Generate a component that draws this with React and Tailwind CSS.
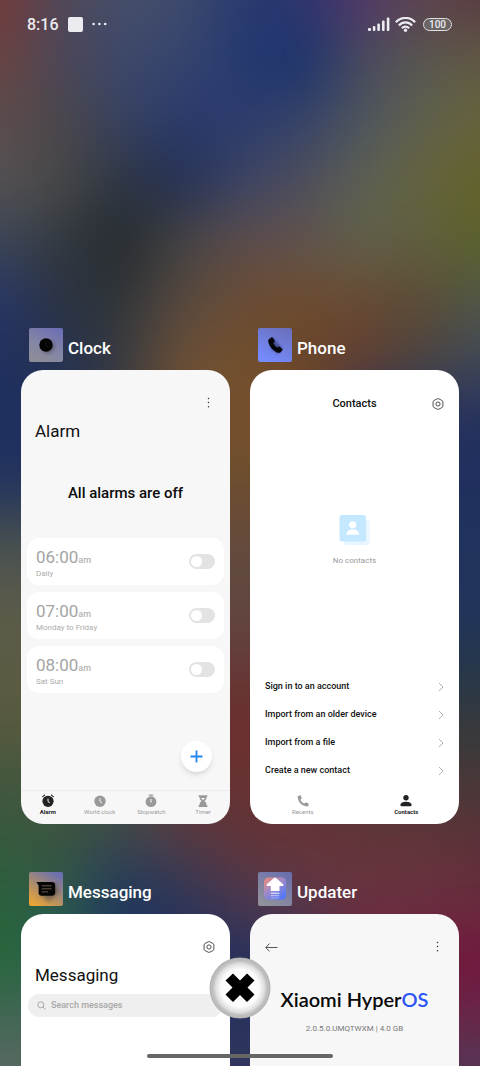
import React from "react";

const wallpaper = [
  "743838 504858 454e6a 414c6c 273a70 2c366e 52366a 5c4550 5a3a40",
  "6a4440 4c4658 3c486a 36446e 263a70 16306e 484a60 575650 605a44",
  "5c4c4e 4a4648 384260 2a3a6c 2b3a6c 36426a 4c545e 606050 66643a",
  "565254 484848 2e3642 222e54 3a4466 4c4c5c 5c6054 66633e 62622a",
  "3c4656 343a40 22272b 444444 5c4c4c 60524e 60604a 5f5f42 5c6228",
  "28366a 2a3240 2e3438 564840 6a4c34 6e4c2e 684a34 5c4a34 505848",
  "20305e 263250 363a40 6c5038 72502e 6a4426 643e30 4c4440 404858",
  "1e2f60 1e2f60 3a3a3c 74502c 74502c 74502c 26305e 26305e 24305e",
  "22325e 22325e 3a3a3c 6e4e30 6e4e30 6e4e30 20305e 20305e 20305e",
  "465050 465050 465050 644a3c 644a3c 644a3c 20325e 20325e 20325e",
  "5a5a4a 5a5a4a 5a5a4a 604840 604840 604840 22345c 22345c 22345c",
  "5c5c46 5c5c46 5c5c46 643c3a 643c3a 643c3a 24364e 24364e 24364e",
  "585a3c 585a3c 585a3c 6a2e2c 6a2e2c 6a2e2c 343a3c 343a3c 343a3c",
  "445640 445640 445640 683232 683232 683232 483838 483838 483838",
  "345a3c 3a543e 384650 503c48 603438 643438 643438 623438 5a3238",
  "2a603c 2e5a4c 1e365e 2c3658 4a3850 603848 683440 6a3242 682c3c",
  "286838 246050 1e3660 222e5c 26305c 26305c 70183c 70183c 72163e",
  "446656 446656 28325e 28325e 28325e 28325e 682848 682848 682848",
  "5c6a62 5c6a62 34385c 34385c 34385c 34385c 503858 503858 503858",
].map((row) => row.split(" "));

function Wallpaper() {
  return (
    <svg
      aria-hidden="true"
      className="absolute inset-0 h-full w-full bg-[#3a3a44]"
      viewBox="0 0 480 1066"
      preserveAspectRatio="none"
    >
      <filter id="soften" filterUnits="userSpaceOnUse" x="-120" y="-120" width="720" height="1320" colorInterpolationFilters="sRGB">
        <feGaussianBlur stdDeviation="29" />
      </filter>
      <g filter="url(#soften)">
        {wallpaper.map((row, r) =>
          row.map((color, c) => {
            const left = c === 0 ? -120 : c * 60 - 30;
            const right = c === row.length - 1 ? 600 : c * 60 + 31;
            const top = r === 0 ? -120 : r * 60 - 30;
            const bottom = r === wallpaper.length - 1 ? 1200 : r * 60 + 31;
            return (
              <rect key={`${r}-${c}`} x={left} y={top} width={right - left} height={bottom - top} fill={`#${color}`} />
            );
          })
        )}
      </g>
    </svg>
  );
}

function StatusBar() {
  return (
    <header className="flex h-12 shrink-0 items-center justify-between pr-7 pl-[27px] text-[#ececf0]">
      <div className="flex items-center gap-[9px]">
        <time className="pt-px text-base font-medium">8:16</time>
        <span className="size-[15px] rounded-xs bg-[#ececf0]" />
        <svg width="15" height="4" viewBox="0 0 15 4" fill="currentColor" aria-hidden="true">
          <circle cx="1.6" cy="2" r="1.3" />
          <circle cx="7.4" cy="2" r="1.3" />
          <circle cx="13.2" cy="2" r="1.3" />
        </svg>
      </div>
      <div className="flex items-center">
        <svg width="22" height="14" viewBox="0 0 22 14" fill="currentColor" aria-label="Signal">
          <rect x="0" y="11" width="3" height="3" rx="1" />
          <rect x="4.8" y="9" width="2.6" height="5" rx="1" />
          <rect x="9.3" y="6.5" width="2.6" height="7.5" rx="1" />
          <rect x="14" y="3.5" width="2.6" height="10.5" rx="1" />
          <rect x="18.8" y="0.5" width="2.6" height="13.5" rx="1" />
        </svg>
        <svg className="ml-[5px]" width="21" height="15" viewBox="0 0 21 15" fill="none" stroke="currentColor" strokeWidth="2.2" aria-label="Wi-Fi">
          <path d="M0.9 5.3C6 -0.5 15 -0.5 20.1 5.3" />
          <path d="M3.9 8.4C7.5 4.4 13.5 4.4 17.1 8.4" />
          <path d="M6.9 11.3C9 9 12 9 14.1 11.3" />
          <circle cx="10.5" cy="13.2" r="1.7" fill="currentColor" stroke="none" />
        </svg>
        <span className="ml-[7px] flex h-[13px] w-[29px] items-center justify-center rounded-full border border-[#e0e0e0] bg-[#777777]/60 pt-px text-[10px] leading-none font-medium">
          100
        </span>
      </div>
    </header>
  );
}

function MoreIcon() {
  return (
    <svg width="4" height="12" viewBox="0 0 4 12" fill="#333" aria-hidden="true">
      <circle cx="1.5" cy="1.6" r="0.75" />
      <circle cx="1.5" cy="5.6" r="0.75" />
      <circle cx="1.5" cy="9.8" r="0.75" />
    </svg>
  );
}

function SettingsIcon() {
  return (
    <svg width="12" height="12" viewBox="0 0 12 12" fill="none" stroke="#3c3c3c" strokeWidth="0.9" strokeLinejoin="round" aria-hidden="true">
      <path d="M5.2 0.8Q6 0.4 6.8 0.8L10.2 2.6Q10.9 3 10.9 3.8V8.2Q10.9 9 10.2 9.4L6.8 11.2Q6 11.6 5.2 11.2L1.8 9.4Q1.1 9 1.1 8.2V3.8Q1.1 3 1.8 2.6Z" />
      <circle cx="6" cy="6" r="2.1" />
    </svg>
  );
}

function IconButton({ label, children }) {
  return (
    <button type="button" aria-label={label} className="flex size-4 items-center justify-center">
      {children}
    </button>
  );
}

const tile = "size-[34px] shrink-0 rounded-xs";

function ClockAppIcon() {
  return (
    <svg className={tile} viewBox="0 0 34 34" aria-hidden="true">
      <defs>
        <linearGradient id="clockBg" x1="0.8" y1="0" x2="0.3" y2="1">
          <stop offset="0" stopColor="#6c6fb4" />
          <stop offset="0.6" stopColor="#8586a4" />
          <stop offset="1" stopColor="#8c8c98" />
        </linearGradient>
        <filter id="clockShade"><feGaussianBlur stdDeviation="2" /></filter>
      </defs>
      <rect width="34" height="34" fill="url(#clockBg)" />
      <path d="M12 20L21 12L26 19L19 26Z" fill="#333" opacity="0.55" filter="url(#clockShade)" />
      <circle cx="17" cy="17" r="6.7" fill="#040404" />
      <path d="M17 13V17L19 19" stroke="#1c1c1c" strokeWidth="0.8" fill="none" />
    </svg>
  );
}

function PhoneAppIcon() {
  return (
    <svg className={tile} viewBox="0 0 34 34" aria-hidden="true">
      <defs>
        <linearGradient id="phoneBg" x1="0.8" y1="0" x2="0.3" y2="1">
          <stop offset="0" stopColor="#6b70bc" />
          <stop offset="1" stopColor="#758cff" />
        </linearGradient>
        <filter id="phoneShade"><feGaussianBlur stdDeviation="1.5" /></filter>
      </defs>
      <rect width="34" height="34" fill="url(#phoneBg)" />
      <path d="M14 10L24 20L20 26L13 20Z" fill="#222650" opacity="0.6" filter="url(#phoneShade)" />
      <path d="M11.2 11.2L13.3 9.7Q14.2 9.2 14.8 10L16.4 12.6Q16.8 13.4 16.1 14L15 15.1Q16.1 18 19.1 20L20.5 19.1Q21.3 18.6 22 19.2L24 21Q24.6 21.8 24 22.5L22.2 24.2Q20.8 25 18.5 23.9Q12.1 20.6 10.6 14Q10.3 12 11.2 11.2Z" fill="#050505" stroke="#050505" strokeWidth="0.6" />
    </svg>
  );
}

function MessagingAppIcon() {
  return (
    <svg className={tile} viewBox="0 0 34 34" aria-hidden="true">
      <defs>
        <linearGradient id="msgBg" x1="0.8" y1="0" x2="0.2" y2="1">
          <stop offset="0" stopColor="#6b6fb0" />
          <stop offset="0.5" stopColor="#a58a72" />
          <stop offset="1" stopColor="#e9a535" />
        </linearGradient>
        <filter id="msgShade"><feGaussianBlur stdDeviation="2" /></filter>
      </defs>
      <rect width="34" height="34" fill="url(#msgBg)" />
      <path d="M11 22L26 11L30 20L20 30Z" fill="#333" opacity="0.45" filter="url(#msgShade)" />
      <path d="M7.4 10H22.8Q26.2 10 26.2 13.2V20.6Q26.2 23.8 22.8 23.8H12.8Q9.6 23.8 9.6 20.6V13.4Z" fill="#060606" />
      <path d="M12.7 13.8H22.6M12.7 16.8H22.6M12.7 19.9H19" stroke="#75604f" strokeWidth="0.9" />
    </svg>
  );
}

function UpdaterAppIcon() {
  return (
    <svg className={tile} viewBox="0 0 34 34" aria-hidden="true">
      <defs>
        <linearGradient id="updBg" x1="0.8" y1="0" x2="0.2" y2="1">
          <stop offset="0" stopColor="#6b70ae" />
          <stop offset="1" stopColor="#92939a" />
        </linearGradient>
        <linearGradient id="updTile" x1="0" y1="0" x2="0.8" y2="1">
          <stop offset="0" stopColor="#f58a72" />
          <stop offset="0.45" stopColor="#a58ac4" />
          <stop offset="1" stopColor="#4f78ff" />
        </linearGradient>
      </defs>
      <rect width="34" height="34" fill="url(#updBg)" />
      <rect x="6" y="5.5" width="22" height="22" rx="4.5" fill="url(#updTile)" />
      <path d="M16 6Q17 5.2 18 6L25.4 12.5Q26 13.8 24.6 14H21.5V19H12.8V14H9.4Q8 13.8 8.6 12.5Z" fill="#fff" />
      <path d="M12.8 21.2H21.3" stroke="#fff" strokeWidth="1" opacity="0.9" />
      <path d="M12.8 23.7H21.3" stroke="#fff" strokeWidth="0.8" opacity="0.7" />
      <path d="M13 26H21" stroke="#fff" strokeWidth="0.7" opacity="0.5" />
    </svg>
  );
}

function AppTask({ name, icon, grow, tone, children }) {
  return (
    <article className={grow ? "flex flex-1 flex-col" : "flex flex-col"}>
      <div className="flex h-[34px] items-center gap-[5px] pl-2">
        {icon}
        <h2 className="pt-1.5 text-[17px] leading-6 font-medium text-white">{name}</h2>
      </div>
      <div className={`mt-2 flex flex-1 flex-col overflow-hidden rounded-t-[22px] ${grow ? "" : "rounded-b-[22px]"} ${tone}`}>
        {children}
      </div>
    </article>
  );
}

const alarms = [
  { time: "06:00", repeat: "Daily" },
  { time: "07:00", repeat: "Monday to Friday" },
  { time: "08:00", repeat: "Sat Sun" },
];

function ClockTab({ kind }) {
  return (
    <svg width="14" height="14" viewBox="0 0 14 14" fill="currentColor" aria-hidden="true">
      {kind === "alarm" && (
        <>
          <circle cx="7" cy="7.3" r="5.6" />
          <path d="M1.7 2.6L3.6 1.2M12.3 2.6L10.4 1.2" stroke="currentColor" strokeWidth="1.1" strokeLinecap="round" />
          <path d="M7 4.6V7.6L8.8 8.6" stroke="#f7f7f7" strokeWidth="1" fill="none" />
        </>
      )}
      {kind === "world" && (
        <>
          <circle cx="7" cy="7.2" r="5.7" />
          <path d="M7 4.2V7.5L9 9" stroke="#f7f7f7" strokeWidth="1" fill="none" />
        </>
      )}
      {kind === "stopwatch" && (
        <>
          <circle cx="7" cy="7.7" r="5.4" />
          <rect x="4.6" y="0.5" width="4.8" height="1.2" rx="0.4" />
          <path d="M7 5V8.6" stroke="#f7f7f7" strokeWidth="1.1" />
        </>
      )}
      {kind === "timer" && (
        <>
          <rect x="2.6" y="1.2" width="8.8" height="1.9" rx="0.6" />
          <rect x="2.6" y="11" width="8.8" height="1.9" rx="0.6" />
          <path d="M3.6 3H10.4V4.6Q10.2 6 8.4 7Q10.2 8.2 10.4 9.8V12H3.6V9.8Q3.8 8.2 5.6 7Q3.8 6 3.6 4.6Z" />
          <path d="M5 4H9Q8.4 5.2 7 5.9Q5.6 5.2 5 4Z" fill="#f7f7f7" />
        </>
      )}
    </svg>
  );
}

const clockTabs = [
  { kind: "alarm", label: "Alarm" },
  { kind: "world", label: "World clock" },
  { kind: "stopwatch", label: "Stopwatch" },
  { kind: "timer", label: "Timer" },
];

function ClockScreen() {
  return (
    <>
      <div className="flex justify-end pt-[25px] pr-[13px]">
        <IconButton label="More options"><MoreIcon /></IconButton>
      </div>
      <h3 className="mt-2 px-3.5 text-[17px] leading-6 text-[#111]">Alarm</h3>
      <p className="mt-[38px] text-center text-[15px] leading-6 font-medium text-[#0c0c0c]">All alarms are off</p>
      <ul className="mt-[33px] flex flex-col gap-[7px] px-1.5">
        {alarms.map((alarm) => (
          <li key={alarm.time}>
            <label className="flex h-[47px] items-center justify-between rounded-xl bg-white pr-[9px] pl-[9px]">
              <span className="flex flex-col pt-1 text-[#ababab]">
                <span className="text-[17px] leading-[18px] text-[#a4a4a4]">
                  {alarm.time}
                  <span className="text-[9px] font-medium text-[#b4b4b4]">am</span>
                </span>
                <span className="text-[8px] leading-[10px]">{alarm.repeat}</span>
              </span>
              <input
                type="checkbox"
                className="h-[15px] w-[26px] appearance-none rounded-full bg-[#e3e3e3] p-0.5 before:block before:size-[11px] before:rounded-full before:bg-white checked:bg-[#2f86ff] checked:before:ml-auto"
              />
            </label>
          </li>
        ))}
      </ul>
      <div className="mt-auto flex justify-end pr-[18px]">
        <button type="button" aria-label="Add alarm" className="flex size-[31px] items-center justify-center rounded-full bg-white shadow-md shadow-black/10">
          <svg width="13" height="13" viewBox="0 0 13 13" stroke="#2384f6" strokeWidth="1.8" aria-hidden="true">
            <path d="M6.5 0.5V12.5M0.5 6.5H12.5" />
          </svg>
        </button>
      </div>
      <nav className="mt-[18px] grid h-[34px] grid-cols-4 border-t border-[#ececec] px-px pt-[3px]">
        {clockTabs.map((tab, i) => (
          <button
            key={tab.kind}
            type="button"
            className={`flex flex-col items-center text-[6px] leading-[8px] ${i === 0 ? "font-bold text-[#222]" : "text-[#999999]"}`}
          >
            <ClockTab kind={tab.kind} />
            {tab.label}
          </button>
        ))}
      </nav>
    </>
  );
}

const contactActions = ["Sign in to an account", "Import from an older device", "Import from a file", "Create a new contact"];

function PhoneScreen() {
  return (
    <>
      <div className="grid grid-cols-[1fr_auto_1fr] items-center px-[13px] pt-[25px]">
        <h3 className="col-start-2 pt-px text-[11px] leading-4 font-medium text-[#111]">Contacts</h3>
        <div className="flex justify-end">
          <IconButton label="Settings"><SettingsIcon /></IconButton>
        </div>
      </div>
      <div className="mt-[103px] flex flex-col items-center">
        <svg width="31" height="31" viewBox="0 0 31 31" aria-hidden="true">
          <rect x="5" y="5" width="25.5" height="25" rx="2" fill="#e8f6ff" />
          <rect x="0.5" y="0" width="26.5" height="26.5" rx="2.5" fill="#c3e8ff" />
          <circle cx="13.7" cy="9.8" r="3.6" fill="#fff" />
          <path d="M7.2 19.7Q7.5 14.7 13.7 14.6Q19.9 14.7 20.2 19.7Z" fill="#fff" />
        </svg>
        <p className="mt-[9px] text-[8px] leading-3 text-[#999999]">No contacts</p>
      </div>
      <ul className="mt-auto">
        {contactActions.map((action) => (
          <li key={action}>
            <button type="button" className="flex h-7 w-full items-center justify-between pr-[15px] pl-[15px] text-left text-[9px] font-medium text-[#111]">
              {action}
              <svg width="6" height="9" viewBox="0 0 6 9" fill="none" stroke="#a8a8a8" strokeWidth="0.9" aria-hidden="true">
                <path d="M1 0L5 4L1 8" />
              </svg>
            </button>
          </li>
        ))}
      </ul>
      <nav className="mt-[5px] grid h-[34px] grid-cols-2 px-px pt-1 text-[6px] leading-[8px]">
        <button type="button" className="flex flex-col items-center text-[#999999]">
          <svg width="14" height="14" viewBox="0 0 14 14" fill="currentColor" aria-hidden="true">
            <path d="M2.2 1.9L4 1.2Q4.7 1.1 4.9 1.7L5.7 4.2Q5.7 4.8 5.2 5.1L4.3 5.8Q5.5 8.3 8.2 9.7L9.1 8.8Q9.5 8.3 10.1 8.5L12.3 9.3Q12.9 9.6 12.7 10.2L12 12Q11.7 12.6 11 12.5Q2.7 11.5 1.6 3Q1.5 2.2 2.2 1.9Z" />
          </svg>
          Recents
        </button>
        <button type="button" className="flex flex-col items-center font-bold text-[#222]">
          <svg width="14" height="14" viewBox="0 0 14 14" fill="currentColor" aria-hidden="true">
            <circle cx="7" cy="3.8" r="2.7" />
            <path d="M1.5 11.6V10.6Q2 7.8 7 7.7Q12 7.8 12.5 10.6V11.6Q12.5 12.3 11.8 12.3H2.2Q1.5 12.3 1.5 11.6Z" />
          </svg>
          Contacts
        </button>
      </nav>
    </>
  );
}

function MessagingScreen() {
  return (
    <>
      <div className="flex justify-end pt-[25px] pr-[13px]">
        <IconButton label="Settings"><SettingsIcon /></IconButton>
      </div>
      <h3 className="mt-2 px-3.5 text-[17px] leading-6 text-[#111]">Messaging</h3>
      <label className="mx-[7px] mt-[7px] flex h-[23px] items-center gap-[5px] rounded-full bg-[#efefef] pl-[9px]">
        <svg className="shrink-0" width="9" height="9" viewBox="0 0 9 9" fill="none" stroke="#a0a0a0" strokeWidth="0.9" aria-hidden="true">
          <circle cx="3.8" cy="3.8" r="3" />
          <path d="M6 6L8.5 8.5" />
        </svg>
        <input
          type="search"
          aria-label="Search messages"
          placeholder="Search messages"
          className="min-w-0 flex-1 bg-transparent text-[9px] font-medium outline-none placeholder:text-[#a8a8a8]"
        />
      </label>
    </>
  );
}

function UpdaterScreen() {
  return (
    <>
      <div className="flex items-center justify-between pt-[25px] pr-[13px] pl-[13px]">
        <IconButton label="Back">
          <svg width="13" height="9" viewBox="0 0 13 9" fill="none" stroke="#444" strokeWidth="0.9" aria-hidden="true">
            <path d="M4.5 0.5L0.8 4.5L4.5 8.5M0.8 4.5H12.5" />
          </svg>
        </IconButton>
        <IconButton label="More options"><MoreIcon /></IconButton>
      </div>
      <h3 className="mt-[30px] text-center font-[Lato] text-xl leading-7 font-semibold whitespace-nowrap text-[#080808]">
        Xiaomi Hyper<span className="text-[#2b55f5]">OS</span>
      </h3>
      <p className="mt-2.5 text-center text-[8px] leading-3 text-[#777777]">2.0.5.0.UMQTWXM | 4.0 GB</p>
    </>
  );
}

function CloseAllButton() {
  return (
    <button type="button" aria-label="Close all apps" className="absolute bottom-[47px] left-1/2 -translate-x-1/2 rounded-full">
      <svg width="62" height="62" viewBox="0 0 62 62" aria-hidden="true">
        <defs>
          <radialGradient id="closeFill">
            <stop offset="0" stopColor="#fff" />
            <stop offset="0.68" stopColor="#fcfcfc" />
            <stop offset="0.88" stopColor="#e0e0e0" />
            <stop offset="1" stopColor="#bcbcbc" />
          </radialGradient>
        </defs>
        <circle cx="31" cy="31" r="30.5" fill="#b0b0b0" />
        <circle cx="31" cy="31" r="29.5" fill="#bebebe" />
        <circle cx="31" cy="31" r="27.5" fill="url(#closeFill)" />
        <path d="M24 16.5L31 23.5L38 16.5L45.5 23.5L38.5 30.5L45.500 37.5L38 45L31 38L24 45L16.5 37.5L23.5 30.5L16.5 23.5Z" fill="#000" />
      </svg>
    </button>
  );
}

export default function App() {
  return (
    <div className="relative flex min-h-screen flex-col overflow-hidden font-[Roboto,sans-serif]">
      <Wallpaper />
      <div className="relative flex flex-1 flex-col">
        <StatusBar />
        <main className="mt-[280px] flex flex-1 flex-col gap-12 px-[21px]">
          <section className="grid min-h-[496px] grid-cols-2 gap-5">
            <AppTask name="Clock" icon={<ClockAppIcon />} tone="bg-[#f7f7f7]"><ClockScreen /></AppTask>
            <AppTask name="Phone" icon={<PhoneAppIcon />} tone="bg-white"><PhoneScreen /></AppTask>
          </section>
          <section className="grid flex-1 grid-cols-2 gap-5">
            <AppTask grow name="Messaging" icon={<MessagingAppIcon />} tone="bg-white"><MessagingScreen /></AppTask>
            <AppTask grow name="Updater" icon={<UpdaterAppIcon />} tone="bg-[#f7f7f7]"><UpdaterScreen /></AppTask>
          </section>
        </main>
      </div>
      <CloseAllButton />
      <div className="absolute bottom-2 left-1/2 h-1 w-[186px] -translate-x-1/2 rounded-full bg-[#666666]" />
    </div>
  );
}
